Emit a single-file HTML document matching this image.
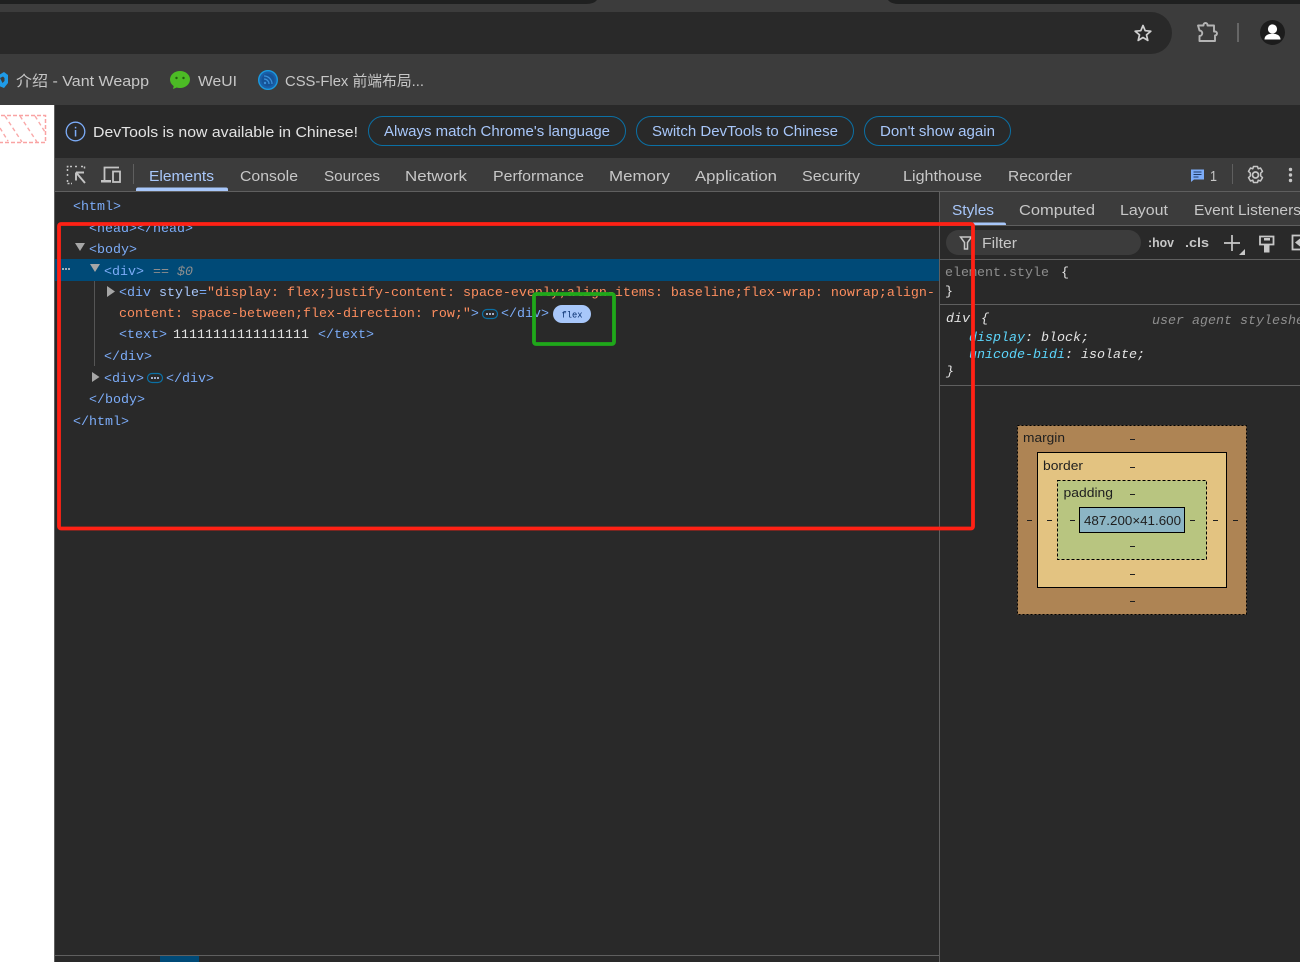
<!DOCTYPE html>
<html><head><meta charset="utf-8"><title>DevTools</title>
<style>
html,body{margin:0;padding:0;background:#292929;width:1300px;height:962px;overflow:hidden}
svg{display:block}
.u{font-family:"Liberation Sans","Noto Sans CJK SC",sans-serif;font-size:15px}
.t{fill:#c7c7c7}
.m{font-family:"Liberation Mono","DejaVu Sans Mono",monospace;font-size:13.33px}
.b{fill:#7cacf8}
.o{fill:#fc8d5e}
.w{fill:#e3e3e3}
.g{fill:#8e8e8e}
.c{fill:#5cd5fb}
.i{font-style:italic}
.x{font-family:"Liberation Sans",sans-serif;font-size:13.3px;fill:#1f1f1f}
</style></head><body>
<svg xmlns="http://www.w3.org/2000/svg" width="1300" height="962" viewBox="0 0 1300 962">
<!-- browser chrome -->
<rect width="1300" height="105" fill="#3c3c3c"/>
<path d="M0 0H597Q594 4 586 4H0Z" fill="#1f2020"/>
<path d="M888 0H1300V4H899Q891 4 888 0Z" fill="#1f2020"/>
<path d="M0 12H1151A21 21 0 0 1 1151 54H0Z" fill="#292929"/>
<path d="M1143 25.500l2.200 5.200 5.600.5-4.300 3.700 1.300 5.500-4.800-2.900-4.800 2.900 1.300-5.500-4.300-3.700 5.600-.5z" fill="none" stroke="#d0d0d0" stroke-width="1.700" stroke-linejoin="round"/>
<path d="M1198 25.500h5.500v-.5a2 2 0 0 1 4 0v.5h6.500v6h1a2 2 0 0 1 0 4v5.500h-15.500v-5a2.700 2.700 0 0 0 0-5.500Z" fill="none" stroke="#b4b4b4" stroke-width="1.900" stroke-linejoin="round"/>
<rect x="1237" y="23" width="2" height="19" fill="#666"/>
<circle cx="1272.500" cy="32.500" r="12.500" fill="#1c1c1c"/>
<circle cx="1272.500" cy="29" r="4.600" fill="#fff"/>
<path d="M1264.500 39.500c0-4.300 3.800-5.800 8-5.800s8 1.500 8 5.800Z" fill="#fff"/>
<!-- bookmarks -->
<path d="M-1 75l5-3 4 3v8l-4 5-5-2Z" fill="#1f9be8"/><path d="M0 78l3-1.500 1.500 1.500v3l-2 2Z" fill="#3c3c3c"/>
<text class="u" x="16" y="86" textLength="133" lengthAdjust="spacingAndGlyphs" fill="#c7c7c7">介绍 - Vant Weapp</text>
<ellipse cx="180" cy="79.500" rx="10" ry="8.500" fill="#4cbb25"/><path d="M174 85l-1 4 5-2Z" fill="#4cbb25"/>
<circle cx="176.500" cy="78" r="1.200" fill="#245c12"/><circle cx="183.500" cy="78" r="1.200" fill="#245c12"/>
<text class="u" x="198" y="86" textLength="39" lengthAdjust="spacingAndGlyphs" fill="#c7c7c7">WeUI</text>
<circle cx="268" cy="80" r="9.300" fill="#1a5fa8" stroke="#1a9ae0" stroke-width="1.400"/><circle cx="268" cy="80" r="6.500" fill="#155397"/>
<path d="M264 76a8 8 0 0 1 8 8M264 79a5 5 0 0 1 5 5" fill="none" stroke="#3a8fd8" stroke-width="1.300"/><circle cx="265" cy="83" r="1.200" fill="#3a8fd8"/>
<text class="u" x="285" y="86" textLength="139" lengthAdjust="spacingAndGlyphs" fill="#c7c7c7">CSS-Flex 前端布局...</text>
<!-- page strip -->
<rect x="0" y="105" width="54" height="857" fill="#fff"/>
<rect x="-5" y="115.500" width="50.500" height="27" fill="none" stroke="#f9a3a3" stroke-width="1.500" stroke-dasharray="4 2"/>
<path d="M5 116l17 26M20 116l17 26M35 116l10 16M0 128l8 13" stroke="#f9a8a8" stroke-width="1.400" stroke-dasharray="4 3" fill="none"/>
<rect x="54" y="105" width="1" height="857" fill="#5f5f5f"/>
<!-- infobar -->
<rect x="55" y="105" width="1245" height="53" fill="#292929"/>
<circle cx="75.500" cy="131.500" r="9.300" fill="none" stroke="#7cacf8" stroke-width="1.300"/>
<rect x="74.800" y="130" width="1.500" height="6.500" fill="#7cacf8"/><rect x="74.800" y="126.800" width="1.500" height="1.600" fill="#7cacf8"/>
<text class="u" x="93" y="137" textLength="265" lengthAdjust="spacingAndGlyphs" fill="#e3e3e3">DevTools is now available in Chinese!</text>
<g fill="none" stroke="#0b70a5" stroke-width="1">
<rect x="368.500" y="116.500" width="257" height="29" rx="14.500"/>
<rect x="636.500" y="116.500" width="217" height="29" rx="14.500"/>
<rect x="864.500" y="116.500" width="146" height="29" rx="14.500"/>
</g>
<g class="u" fill="#a8c7fa">
<text x="384" y="136" textLength="226" lengthAdjust="spacingAndGlyphs">Always match Chrome's language</text>
<text x="652" y="136" textLength="186" lengthAdjust="spacingAndGlyphs">Switch DevTools to Chinese</text>
<text x="880" y="136" textLength="115" lengthAdjust="spacingAndGlyphs">Don't show again</text>
</g>
<!-- tab bar -->
<rect x="55" y="158" width="1245" height="33" fill="#3c3c3c"/>
<rect x="55" y="191" width="1245" height="1" fill="#5f5f5f"/>
<path d="M72 166.500h-4.500v4.500M75 166.500h3M81 166.500h3.500v2.500M67.500 174v3M67.500 180v3.500h4.500" fill="none" stroke="#c4c4c4" stroke-width="1.500" stroke-dasharray="2 1.500"/>
<path d="M76 172.500h8M76 172.500v8M76.500 173l8.500 10" fill="none" stroke="#c4c4c4" stroke-width="1.900"/>
<path d="M104.500 180v-12.500h14.500" fill="none" stroke="#c4c4c4" stroke-width="1.800"/>
<rect x="101" y="180" width="10" height="2.500" fill="#c4c4c4"/>
<rect x="113" y="171.500" width="7" height="10.500" fill="none" stroke="#c4c4c4" stroke-width="1.800"/>
<rect x="133" y="164" width="1" height="20" fill="#5f5f5f"/>
<g class="u">
<text x="149" y="181" textLength="65" lengthAdjust="spacingAndGlyphs" fill="#a8c7fa">Elements</text>
<g fill="#c7c7c7">
<text x="240" y="181" textLength="58" lengthAdjust="spacingAndGlyphs">Console</text>
<text x="324" y="181" textLength="56" lengthAdjust="spacingAndGlyphs">Sources</text>
<text x="405" y="181" textLength="62" lengthAdjust="spacingAndGlyphs">Network</text>
<text x="493" y="181" textLength="91" lengthAdjust="spacingAndGlyphs">Performance</text>
<text x="609" y="181" textLength="61" lengthAdjust="spacingAndGlyphs">Memory</text>
<text x="695" y="181" textLength="82" lengthAdjust="spacingAndGlyphs">Application</text>
<text x="802" y="181" textLength="58" lengthAdjust="spacingAndGlyphs">Security</text>
<text x="903" y="181" textLength="79" lengthAdjust="spacingAndGlyphs">Lighthouse</text>
<text x="1008" y="181" textLength="64" lengthAdjust="spacingAndGlyphs">Recorder</text>
</g></g>
<path d="M136 191v-1.500q0-2 2-2h88q2 0 2 2v1.500Z" fill="#a8c7fa"/>
<path d="M1191 169.500h13v10h-10l-3 2.500Z" fill="#7cacf8"/>
<path d="M1193.500 172h8M1193.500 174.500h8M1193.500 177h5" stroke="#1f3a66" stroke-width="1"/>
<text class="u" x="1210" y="181" textLength="7" lengthAdjust="spacingAndGlyphs" fill="#c7c7c7">1</text>
<rect x="1232" y="164" width="1" height="20" fill="#5f5f5f"/>
<g transform="translate(1255.500 175)" fill="none" stroke="#c7c7c7">
<circle r="3" stroke-width="1.800"/>
<path d="M-2 -8.500h4l.7 2.300 2.300-.8 2 3.400-1.800 1.600v3l1.800 1.600-2 3.400-2.300-.8-.7 2.300h-4l-.7-2.300-2.300.8-2-3.400 1.800-1.600v-3l-1.800-1.600 2-3.400 2.300.8Z" stroke-width="1.500" stroke-linejoin="round"/>
</g>
<circle cx="1290.500" cy="169.500" r="1.700" fill="#c7c7c7"/><circle cx="1290.500" cy="175" r="1.700" fill="#c7c7c7"/><circle cx="1290.500" cy="180.500" r="1.700" fill="#c7c7c7"/>
<!-- elements panel -->
<rect x="939" y="192" width="1" height="770" fill="#5f5f5f"/>
<rect x="55" y="259" width="884" height="22" fill="#004a77"/>
<rect x="94" y="281" width="1" height="85" fill="#555"/>
<g fill="#a6a6a6">
<path d="M75 243h10l-5 8Z"/>
<path d="M90 264h10l-5 8Z"/>
<path d="M107 286l8 5.500-8 5.500Z"/>
<path d="M92 372l7.500 5-7.500 5Z"/>
</g>
<g fill="#d0d0d0"><circle cx="63" cy="269" r="1"/><circle cx="66" cy="269" r="1"/><circle cx="69" cy="269" r="1"/></g>
<g class="m">
<text class="b" x="73" y="210">&lt;html&gt;</text>
<text class="b" x="89" y="232">&lt;head&gt;&lt;/head&gt;</text>
<text class="b" x="89" y="253">&lt;body&gt;</text>
<text class="b" x="104" y="275">&lt;div&gt;</text>
<text class="g i" x="153" y="275">== $0</text>
<text x="119" y="296"><tspan class="b">&lt;div</tspan><tspan fill="#a8c7fa"> style</tspan><tspan class="b">=</tspan><tspan class="o">"display: flex;justify-content: space-evenly;align-items: baseline;flex-wrap: nowrap;align-</tspan></text>
<text x="119" y="317"><tspan class="o">content: space-between;flex-direction: row;"</tspan><tspan class="b">&gt;</tspan></text>
<text class="b" x="501" y="317">&lt;/div&gt;</text>
<text x="119" y="338"><tspan class="b">&lt;text&gt;</tspan></text>
<text class="w" x="173" y="338">11111111111111111</text>
<text class="b" x="318" y="338">&lt;/text&gt;</text>
<text class="b" x="104" y="360">&lt;/div&gt;</text>
<text class="b" x="104" y="382">&lt;div&gt;</text>
<text class="b" x="166" y="382">&lt;/div&gt;</text>
<text class="b" x="89" y="403">&lt;/body&gt;</text>
<text class="b" x="73" y="425">&lt;/html&gt;</text>
</g>
<rect x="482.500" y="309.500" width="15" height="9" rx="4.500" fill="none" stroke="#0b70a5" stroke-width="1.200"/>
<g fill="#c9dcff"><circle cx="487" cy="314" r="1"/><circle cx="490" cy="314" r="1"/><circle cx="493" cy="314" r="1"/></g>
<rect x="147.500" y="373.500" width="15" height="9" rx="4.500" fill="none" stroke="#0b70a5" stroke-width="1.200"/>
<g fill="#c9dcff"><circle cx="152" cy="378" r="1"/><circle cx="155" cy="378" r="1"/><circle cx="158" cy="378" r="1"/></g>
<rect x="553" y="305" width="38" height="18" rx="9" fill="#a8c7fa"/>
<text x="561.500" y="317.500" font-family="Liberation Mono,monospace" font-size="9.300" fill="#062e6f" textLength="21" lengthAdjust="spacingAndGlyphs">flex</text>
<rect x="55" y="955" width="884" height="1" fill="#5f5f5f"/>
<rect x="160" y="956" width="39" height="6" fill="#004a77"/>
<!-- sidebar -->
<rect x="940" y="192" width="360" height="33" fill="#3c3c3c"/>
<rect x="940" y="225" width="360" height="1" fill="#5f5f5f"/>
<g class="u">
<text x="952" y="215" textLength="42" lengthAdjust="spacingAndGlyphs" fill="#a8c7fa">Styles</text>
<g fill="#c7c7c7">
<text x="1019" y="215" textLength="76" lengthAdjust="spacingAndGlyphs">Computed</text>
<text x="1120" y="215" textLength="48" lengthAdjust="spacingAndGlyphs">Layout</text>
<text x="1194" y="215" textLength="107" lengthAdjust="spacingAndGlyphs">Event Listeners</text>
</g></g>
<path d="M941 225v-.5q0-2 2-2h61q2 0 2 2v.5Z" fill="#a8c7fa"/>
<rect x="946" y="230" width="195" height="25" rx="12.500" fill="#3c3c3c"/>
<path d="M960.500 237h11l-4 5.500v6.500h-3v-6.500Z" fill="none" stroke="#c7c7c7" stroke-width="1.500"/>
<text class="u" x="982" y="248" textLength="35" lengthAdjust="spacingAndGlyphs" fill="#c7c7c7">Filter</text>
<text x="1148" y="247" font-family="Liberation Sans,sans-serif" font-weight="bold" font-size="13" fill="#c7c7c7" textLength="26" lengthAdjust="spacingAndGlyphs">:hov</text>
<text x="1185" y="247" font-family="Liberation Sans,sans-serif" font-weight="bold" font-size="13" fill="#c7c7c7" textLength="24" lengthAdjust="spacingAndGlyphs">.cls</text>
<path d="M1224 243h16M1232 235v16" stroke="#c7c7c7" stroke-width="1.700"/>
<path d="M1245 249v6h-6Z" fill="#c7c7c7"/>
<path d="M1260 236.500h13.500v8h-13.500Z" fill="none" stroke="#c7c7c7" stroke-width="1.800"/>
<rect x="1264" y="238" width="6" height="2.500" fill="#c7c7c7"/>
<path d="M1264 245h5.500v7.500h-5.500Z" fill="#c7c7c7"/>
<rect x="1292.500" y="235.500" width="12" height="14" fill="none" stroke="#c7c7c7" stroke-width="1.800"/>
<path d="M1300 238.500v8l-5-4Z" fill="#c7c7c7"/>
<rect x="940" y="259" width="360" height="1" fill="#5f5f5f"/>
<rect x="940" y="304" width="360" height="1" fill="#5f5f5f"/>
<rect x="940" y="385" width="360" height="1" fill="#5f5f5f"/>
<g class="m">
<text class="g" x="945" y="276">element.style</text>
<text class="w" x="1061" y="276">{</text>
<text class="w" x="945" y="295">}</text>
<text class="w i" x="946" y="322">div</text>
<text class="w i" x="981" y="322">{</text>
<text class="g i" x="1152" y="324">user agent stylesheet</text>
<text class="i" x="969" y="341"><tspan class="c">display</tspan><tspan class="w">: block;</tspan></text>
<text class="i" x="969" y="358"><tspan class="c">unicode-bidi</tspan><tspan class="w">: isolate;</tspan></text>
<text class="w i" x="946" y="375">}</text>
</g>
<!-- box model -->
<rect x="1017.500" y="425.500" width="229" height="189" fill="#ae8454" stroke="#000" stroke-width="1" stroke-dasharray="2 2"/>
<rect x="1037.500" y="452.500" width="189" height="135" fill="#e3c381" stroke="#000" stroke-width="1"/>
<rect x="1057.500" y="480.500" width="149" height="79" fill="#b8c580" stroke="#000" stroke-width="1" stroke-dasharray="3 2"/>
<rect x="1079.500" y="507.500" width="105" height="25" fill="#8cb5c4" stroke="#000" stroke-width="1"/>
<g class="x">
<text x="1023" y="442" textLength="42" lengthAdjust="spacingAndGlyphs">margin</text>
<text x="1043" y="470" textLength="40" lengthAdjust="spacingAndGlyphs">border</text>
<text x="1063.500" y="497" textLength="49.500" lengthAdjust="spacingAndGlyphs">padding</text>
<text x="1084" y="525" textLength="97" lengthAdjust="spacingAndGlyphs">487.200×41.600</text>
</g>
<g fill="#1f1f1f">
<rect x="1130" y="439" width="5" height="1"/>
<rect x="1130" y="467" width="5" height="1"/>
<rect x="1130" y="494" width="5" height="1"/>
<rect x="1130" y="546" width="5" height="1"/>
<rect x="1130" y="574" width="5" height="1"/>
<rect x="1130" y="601" width="5" height="1"/>
<rect x="1027" y="520" width="5" height="1"/>
<rect x="1047" y="520" width="5" height="1"/>
<rect x="1070" y="520" width="5" height="1"/>
<rect x="1190" y="520" width="5" height="1"/>
<rect x="1213" y="520" width="5" height="1"/>
<rect x="1233" y="520" width="5" height="1"/>
</g>
<!-- annotations -->
<rect x="59" y="224" width="914" height="304.500" rx="2" fill="none" stroke="#ff2115" stroke-width="3.800"/>
<rect x="534" y="294" width="80" height="50" rx="2" fill="none" stroke="#1fa81a" stroke-width="3.800"/>
</svg>
</body></html>
